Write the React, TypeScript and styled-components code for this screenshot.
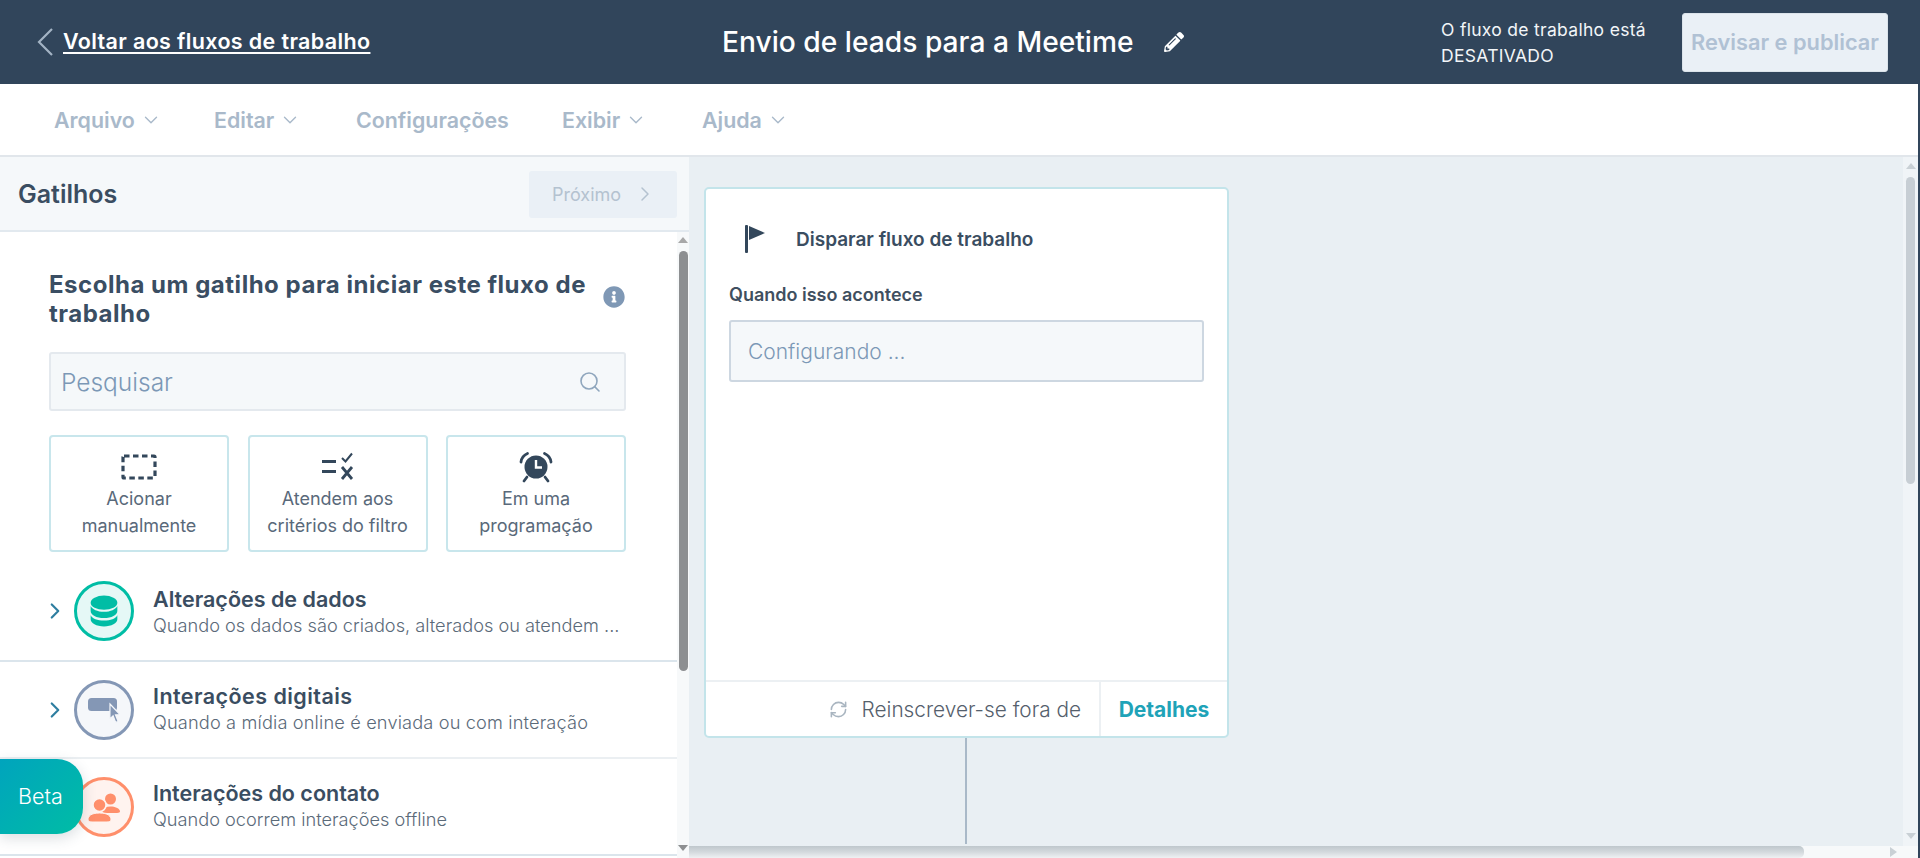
import React from "react";
import styled, { createGlobalStyle } from "styled-components";
import { ChevronRight, ChevronDown, Search, RefreshCw } from "lucide-react";
import { FaPencilAlt, FaInfoCircle } from "react-icons/fa";

const Global = createGlobalStyle`
  html, body { margin: 0; padding: 0; background: #fff; }
  body { font-family: Inter, "Noto Sans", "Liberation Sans", sans-serif; color: #33475b; }
  * { box-sizing: border-box; }
`;

const Page = styled.div`
  width: 1920px; height: 858px; overflow: hidden; position: relative;
  display: flex; flex-direction: column;
  border-right: 2px solid #31455b; background: #fff;
`;
const Header = styled.header`
  height: 84px; flex: none; background: #31455b; color: #fff;
  display: grid; grid-template-columns: 722px 719px 241px 1fr; align-items: center;
`;
const BackGroup = styled.div`
  display: flex; align-items: center; padding-left: 36px; gap: 9px;
  color: #a3b3c4;
`;
const BackChevron = styled.svg`
  width: 18px; height: 30px; flex: none;
`;
const BackLink = styled.a`
  color: #fff; font-size: 21.5px; font-weight: 600; letter-spacing: 0.36px; margin-top: -2px;
  text-decoration: underline; text-underline-offset: 3px; text-decoration-thickness: 2px;
  white-space: nowrap;
`;
const TitleGroup = styled.div`
  display: flex; align-items: center; gap: 30px;
`;
const FlowTitle = styled.h1`
  margin: 0; font-size: 28.2px; font-weight: 500; white-space: nowrap;
`;
const Status = styled.div`
  font-size: 17.5px; line-height: 26px; font-weight: 400; color: #f2f5f8; letter-spacing: 0.3px; white-space: nowrap; padding-top: 1px;
`;
const PublishButton = styled.button`
  width: 206px; height: 59px; border: 1px solid #dbe3ea; border-radius: 3px;
  background: #eaf0f6; color: #b0c1d4; font: 600 21.8px Inter, sans-serif; padding: 0; white-space: nowrap;
`;
const MenuBar = styled.nav`
  height: 73px; flex: none; background: #fff; border-bottom: 2px solid #e1e6eb;
  display: flex; align-items: center; padding-left: 54px;
`;
const MenuItem = styled.div<{ $w: number }>`
  width: ${(p) => p.$w}px; display: flex; align-items: center; gap: 5px;
  color: #a9b9ca; font-size: 21.4px; font-weight: 600; padding-top: 1px;
`;
const Body = styled.div`
  flex: 1; min-height: 0; display: flex;
`;
const LeftPanel = styled.aside`
  width: 689px; flex: none; display: flex; flex-direction: column; background: #fff;
`;
const PanelHeader = styled.div`
  height: 75px; flex: none; background: #f5f8fa; border-bottom: 2px solid #e2e9ef;
  display: flex; align-items: center; justify-content: space-between;
  padding: 0 12px 0 18px;
`;
const PanelTitle = styled.h2`
  margin: 1px 0 0; font-size: 25px; font-weight: 600; color: #3a4d61;
`;
const NextButton = styled.button`
  width: 148px; height: 47px; border: 0; border-radius: 3px; background: #eaf0f6;
  color: #b4c2d0; font: 400 18px Inter, sans-serif;
  display: flex; align-items: center; justify-content: center; gap: 12px; padding: 0 0 0 3px;
  margin-top: 1px;
`;
const PanelBody = styled.div`
  flex: 1; min-height: 0; display: flex;
`;
const PanelScroll = styled.div`
  width: 677px; flex: none; padding-top: 38px;
`;
const Intro = styled.div`
  padding: 0 0 0 49px;
`;
const HeadingRow = styled.div`
  width: 577px; display: flex; align-items: center; justify-content: space-between;
`;
const Heading = styled.h3`
  margin: 0; width: 550px; font-size: 24px; line-height: 29px; font-weight: 700; color: #3a4e63; letter-spacing: 0.52px;
`;
const InfoIcon = styled.span`
  display: flex; color: #7f98b5; margin-right: 1px; margin-top: -4px;
`;
const SearchBox = styled.div`
  width: 577px; height: 59px; margin-top: 24px; background: #f5f8fa;
  border: 2px solid #e4e9ee; border-radius: 3px;
  display: flex; align-items: center; justify-content: space-between; padding: 0 22px 0 10px;
  color: #7c98b6; font-size: 24.5px; font-weight: 300;
`;
const SearchIconWrap = styled.span`
  display: flex; color: #8fa6bd;
`;
const Choices = styled.div`
  width: 577px; margin-top: 24px; display: grid; grid-template-columns: repeat(3, 180px);
  justify-content: space-between;
`;
const Choice = styled.div`
  height: 117px; border: 2px solid #c8e6ec; border-radius: 4px; background: #fff;
  display: flex; flex-direction: column; align-items: center; padding-top: 13px;
  text-align: center; color: #59697a; font-size: 18px; line-height: 27px; font-weight: 400;
`;
const ChoiceIcon = styled.svg`
  width: 36px; height: 34px; flex: none; margin-bottom: 1px; color: #33475b;
`;
const Row = styled.div<{ $strong?: boolean; $h: number; $pt?: number }>`
  height: ${(p) => p.$h}px; display: flex; align-items: center; padding-left: 42px;
  padding-top: ${(p) => p.$pt ?? 0}px;
  border-bottom: 2px solid ${(p) => (p.$strong ? "#dbe5ec" : "#ebeff2")};
  background: #fff;
`;
const RowChevron = styled.span`
  display: flex; width: 32px; color: #2e7ea0;
`;
const Circle = styled.span<{ $c: string; $bg: string }>`
  width: 60px; height: 60px; border-radius: 50%; flex: none;
  border: 3px solid ${(p) => p.$c}; background: ${(p) => p.$bg}; color: ${(p) => p.$c};
  display: flex; align-items: center; justify-content: center;
`;
const RowText = styled.div<{ $mt?: number }>`
  margin: ${(p) => p.$mt ?? 0}px 0 0 19px; display: flex; flex-direction: column; gap: 3px; padding-bottom: 2px;
`;
const RowTitle = styled.div<{ $ls?: number }>`
  font-size: 21.5px; line-height: 24px; font-weight: 600; color: #3a4d61; white-space: nowrap;
  letter-spacing: ${(p) => p.$ls ?? 0}px;
`;
const RowSub = styled.div<{ $ls?: number }>`
  font-size: 18.2px; line-height: 22px; font-weight: 300; color: #5b6a79; white-space: nowrap;
  letter-spacing: ${(p) => p.$ls ?? 0}px;
`;
const Track = styled.div<{ $w: number; $bg: string }>`
  width: ${(p) => p.$w}px; flex: none; background: ${(p) => p.$bg};
  display: flex; flex-direction: column; align-items: center; justify-content: space-between;
`;
const Thumb = styled.div<{ $top: number; $h: number; $w: number; $c: string }>`
  width: ${(p) => p.$w}px; height: ${(p) => p.$h}px; margin-top: ${(p) => p.$top}px;
  background: ${(p) => p.$c}; border-radius: 5px;
`;
const ArrowUp = styled.span<{ $c: string; $m: number }>`
  width: 0; height: 0; margin-top: ${(p) => p.$m}px; border: 5px solid transparent; border-top: 0;
  border-bottom: 6px solid ${(p) => p.$c};
`;
const ArrowDown = styled.span<{ $c: string; $m: number }>`
  width: 0; height: 0; margin-bottom: ${(p) => p.$m}px; border: 5px solid transparent; border-bottom: 0;
  border-top: 6px solid ${(p) => p.$c};
`;
const TrackTop = styled.div`
  display: flex; flex-direction: column; align-items: center;
`;
const RightColumn = styled.section`
  flex: 1; min-width: 0; display: flex; flex-direction: column;
`;
const Canvas = styled.div`
  flex: 1; min-height: 0; display: flex; background: #e9eff3;
`;
const Stage = styled.div`
  flex: 1; min-width: 0; padding: 30px 0 0 15px; display: flex; flex-direction: column;
`;
const Node = styled.article`
  width: 525px; height: 551px; flex: none; background: #fff; border: 2px solid #c3e4ea; border-radius: 5px;
  display: flex; flex-direction: column;
`;
const NodeHead = styled.div`
  display: flex; align-items: center; padding: 36px 0 0 38px; gap: 30px;
  font-size: 19px; font-weight: 600; color: #3a4d61; white-space: nowrap;
`;
const FlagIcon = styled.svg`
  width: 22px; height: 28px; flex: none; color: #33475b;
`;
const NodeLabel = styled.div`
  margin: 31px 0 0 23px; font-size: 18px; line-height: 22px; font-weight: 600; color: #3f4f60; white-space: nowrap;
`;
const NodeField = styled.div`
  margin: 14px 0 0 23px; width: 475px; height: 62px; background: #f5f8fa;
  border: 2px solid #cdd7e1; border-radius: 3px; display: flex; align-items: center; padding-left: 17px;
  color: #7c98b6; font-size: 21px; font-weight: 300;
`;
const NodeFoot = styled.div`
  margin-top: auto; height: 56px; border-top: 2px solid #ecf0f3; display: flex;
`;
const Reenroll = styled.div`
  flex: 1; display: flex; align-items: center; justify-content: flex-end; padding-right: 18px; gap: 14px;
  font-size: 20.8px; font-weight: 300; color: #55606c; white-space: nowrap;
`;
const RefreshWrap = styled.span`
  display: flex; color: #a9b5c0;
`;
const Details = styled.div`
  width: 128px; flex: none; border-left: 2px solid #ecf0f3; display: flex; align-items: center; justify-content: center;
  font-size: 21px; font-weight: 700; color: #1fa3b8;
`;
const Connector = styled.div`
  width: 2px; height: 106px; margin-left: 261px; background: #a9b9c8;
`;
const HBar = styled.div`
  height: 12px; flex: none; background: #f7f9fa; display: flex; align-items: center; justify-content: space-between; padding-right: 21px;
`;
const HThumb = styled.div`
  width: 1115px; height: 12px; background: linear-gradient(180deg, #bfc7cc 0%, #d3d9dd 50%, #eef1f3 100%); border-radius: 0 5px 5px 0;
`;
const ArrowRight = styled.span`
  width: 0; height: 0; border: 5px solid transparent; border-right: 0; border-left: 7px solid #c9d0d5;
`;
const Beta = styled.div`
  position: absolute; left: 0; top: 759px; width: 83px; height: 75px;
  border-radius: 0 26px 26px 0; background: linear-gradient(135deg, #00a4bd 0%, #00bda5 100%);
  color: #fff; font-size: 21.5px; font-weight: 300; display: flex; align-items: center; padding: 0 0 2px 18px;
  box-shadow: 0 4px 14px rgba(50, 70, 90, 0.18);
`;

const DatabaseIcon = () => (
  <svg width="30" height="32" viewBox="0 0 36 38" fill="currentColor">
    <ellipse cx="18" cy="9" rx="16" ry="8.500" />
    <path d="M2 13c2 4 8 7 16 7s14-3 16-7v6c0 5-7 8.500-16 8.500S2 24 2 19z" />
    <path d="M2 24c2 4 8 6.500 16 6.500s14-2.500 16-6.500v5c0 5-7 8.500-16 8.500S2 34 2 29z" />
  </svg>
);
const ClickIcon = () => (
  <svg width="36" height="28" viewBox="0 0 36 28" fill="currentColor">
    <rect x="2" y="2" width="29" height="13" rx="3.500" />
    <path d="M24 8l10 10.500-4.500.4 2.700 6.500-2.500 1-2.600-6.500-3.200 3z" stroke="#f5f7fa" strokeWidth="1.200" />
  </svg>
);
const PeopleIcon = () => (
  <svg width="34" height="30" viewBox="0 0 34 30" fill="currentColor">
    <circle cx="23.500" cy="7" r="5.500" />
    <path d="M15 19c1-3 4-4.500 8.500-4.500S32 16 33 19c.3 1-1 2-3 2H20c-3 0-5-1-5-2z" />
    <circle cx="12.500" cy="13" r="6.500" stroke="#fff3ef" strokeWidth="1.500" />
    <path d="M1 28c0-4 3-7 11.500-7S24 24 24 28c0 1.200-2 2-4 2H5c-2 0-4-.8-4-2z" stroke="#fff3ef" strokeWidth="1" />
  </svg>
);

const ChoiceManual = () => (
  <ChoiceIcon viewBox="0 0 36 34" fill="none" stroke="currentColor" strokeWidth="3.200">
    <rect x="2" y="6" width="32" height="22" rx="1" strokeDasharray="5.500 3.500" />
  </ChoiceIcon>
);
const ChoiceFilter = () => (
  <ChoiceIcon viewBox="0 0 36 34" fill="none" stroke="currentColor" strokeWidth="2.800">
    <path d="M2 11.500h14M2 21.500h14" />
    <path d="M22 8l3.500 3.500 6.500-8" strokeWidth="2" />
    <path d="M22 17l10 12M32 17L22 29" />
  </ChoiceIcon>
);
const ChoiceClock = () => (
  <ChoiceIcon viewBox="0 0 36 34" fill="currentColor">
    <circle cx="18" cy="17" r="11.500" />
    <path d="M18 10v7.500h6" fill="none" stroke="#fff" strokeWidth="2.400" />
    <path d="M3 12c.5-4 3-7 6.500-8.500M33 12c-.5-4-3-7-6.500-8.500M9 27l-3 4M27 27l3 4" fill="none" stroke="currentColor" strokeWidth="2.800" strokeLinecap="round" />
  </ChoiceIcon>
);

export default function App() {
  return (
    <Page>
      <Global />
      <Header>
        <BackGroup>
          <BackChevron viewBox="0 0 18 30" fill="none" stroke="currentColor" strokeWidth="2.200">
            <path d="M16 2L3 15l13 13" />
          </BackChevron>
          <BackLink>Voltar aos fluxos de trabalho</BackLink>
        </BackGroup>
        <TitleGroup>
          <FlowTitle>Envio de leads para a Meetime</FlowTitle>
          <FaPencilAlt size={20} />
        </TitleGroup>
        <Status>
          O fluxo de trabalho está
          <br />
          DESATIVADO
        </Status>
        <PublishButton>Revisar e publicar</PublishButton>
      </Header>
      <MenuBar>
        <MenuItem $w={160}>Arquivo <ChevronDown size={22} strokeWidth={1.5} /></MenuItem>
        <MenuItem $w={142}>Editar <ChevronDown size={22} strokeWidth={1.5} /></MenuItem>
        <MenuItem $w={206}>Configurações</MenuItem>
        <MenuItem $w={140}>Exibir <ChevronDown size={22} strokeWidth={1.5} /></MenuItem>
        <MenuItem $w={120}>Ajuda <ChevronDown size={22} strokeWidth={1.5} /></MenuItem>
      </MenuBar>
      <Body>
        <LeftPanel>
          <PanelHeader>
            <PanelTitle>Gatilhos</PanelTitle>
            <NextButton>Próximo <ChevronRight size={24} strokeWidth={1.5} /></NextButton>
          </PanelHeader>
          <PanelBody>
            <PanelScroll>
              <Intro>
                <HeadingRow>
                  <Heading>Escolha um gatilho para iniciar este fluxo de trabalho</Heading>
                  <InfoIcon><FaInfoCircle size={22} /></InfoIcon>
                </HeadingRow>
                <SearchBox>
                  Pesquisar
                  <SearchIconWrap><Search size={24} strokeWidth={1.6} /></SearchIconWrap>
                </SearchBox>
                <Choices>
                  <Choice><ChoiceManual />Acionar<br />manualmente</Choice>
                  <Choice><ChoiceFilter />Atendem aos<br />critérios do filtro</Choice>
                  <Choice><ChoiceClock />Em uma<br />programação</Choice>
                </Choices>
              </Intro>
              <Row $strong $h={110} $pt={10}>
                <RowChevron><ChevronRight size={26} strokeWidth={2} /></RowChevron>
                <Circle $c="#00bda5" $bg="#e5f8f6"><DatabaseIcon /></Circle>
                <RowText $mt={2}>
                  <RowTitle>Alterações de dados</RowTitle>
                  <RowSub>Quando os dados são criados, alterados ou atendem ...</RowSub>
                </RowText>
              </Row>
              <Row $h={97}>
                <RowChevron><ChevronRight size={26} strokeWidth={2} /></RowChevron>
                <Circle $c="#8497b5" $bg="#f5f7fa"><ClickIcon /></Circle>
                <RowText>
                  <RowTitle $ls={0.45}>Interações digitais</RowTitle>
                  <RowSub $ls={0.15}>Quando a mídia online é enviada ou com interação</RowSub>
                </RowText>
              </Row>
              <Row $strong $h={97}>
                <RowChevron />
                <Circle $c="#ff8f6b" $bg="#fff3ef"><PeopleIcon /></Circle>
                <RowText>
                  <RowTitle>Interações do contato</RowTitle>
                  <RowSub>Quando ocorrem interações offline</RowSub>
                </RowText>
              </Row>
            </PanelScroll>
            <Track $w={12} $bg="#f7f9fa">
              <TrackTop>
                <ArrowUp $c="#a8a8a8" $m={5} />
                <Thumb $top={8} $h={420} $w={9} $c="#8d8f91" />
              </TrackTop>
              <ArrowDown $c="#8d8f91" $m={7} />
            </Track>
          </PanelBody>
        </LeftPanel>
        <RightColumn>
          <Canvas>
            <Stage>
              <Node>
                <NodeHead>
                  <FlagIcon viewBox="0 0 22 28" fill="currentColor">
                    <rect x="1" y="0" width="3" height="28" rx="1" />
                    <path d="M5 1l16 7-16 7z" />
                  </FlagIcon>
                  Disparar fluxo de trabalho
                </NodeHead>
                <NodeLabel>Quando isso acontece</NodeLabel>
                <NodeField>Configurando ...</NodeField>
                <NodeFoot>
                  <Reenroll>
                    <RefreshWrap><RefreshCw size={19} strokeWidth={2} /></RefreshWrap>
                    Reinscrever-se fora de
                  </Reenroll>
                  <Details>Detalhes</Details>
                </NodeFoot>
              </Node>
              <Connector />
            </Stage>
            <Track $w={15} $bg="#f0f4f7">
              <TrackTop>
                <ArrowUp $c="#c9d0d5" $m={6} />
                <Thumb $top={8} $h={307} $w={9} $c="#c7ced4" />
              </TrackTop>
              <ArrowDown $c="#c9d0d5" $m={7} />
            </Track>
          </Canvas>
          <HBar>
            <HThumb />
            <ArrowRight />
          </HBar>
        </RightColumn>
      </Body>
      <Beta>Beta</Beta>
    </Page>
  );
}
